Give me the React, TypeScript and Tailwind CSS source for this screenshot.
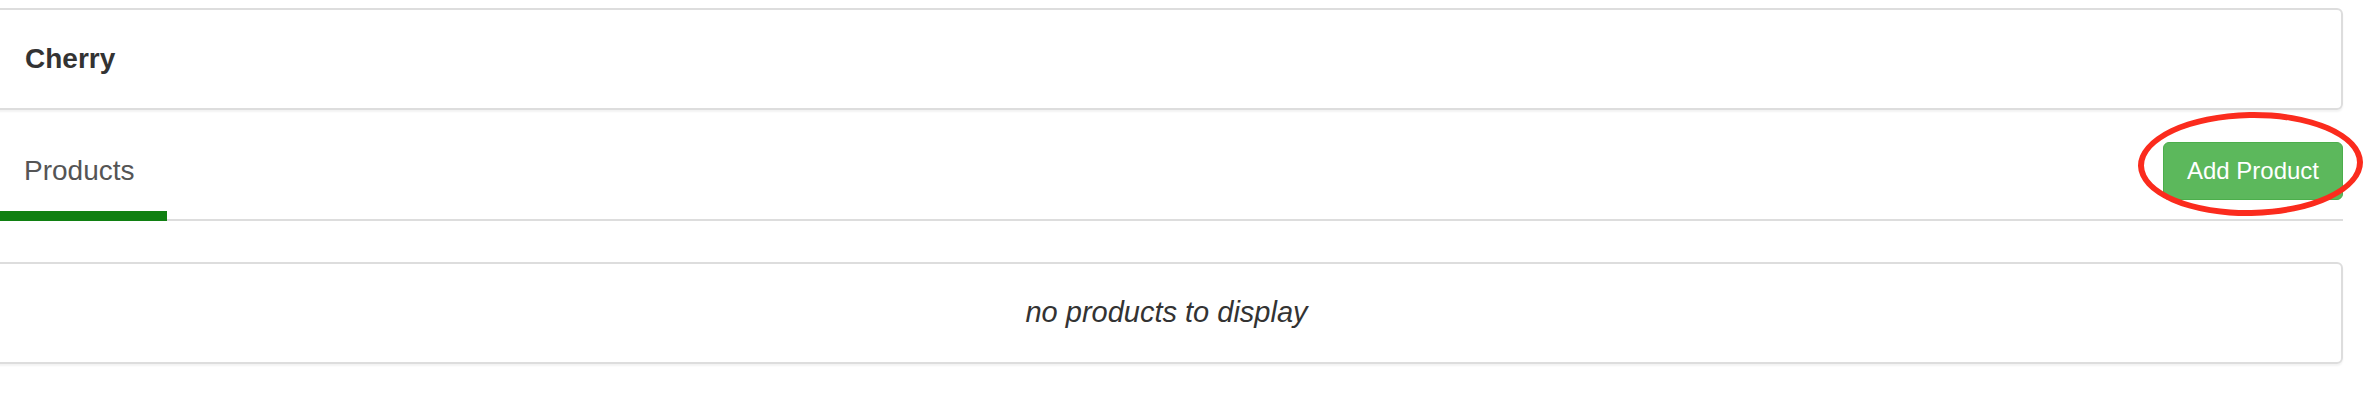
export default function App() {
  return (
    <div className="w-full h-[409px] overflow-hidden bg-white font-['Liberation_Sans',Arial,sans-serif]">
      <div className="-ml-[10px] mr-[20px] pt-[8px]">
        {/* Heading panel */}
        <div className="h-[102px] flex items-center pl-[33px] border-2 border-[#dddddd] rounded-[6px] shadow-[0_2px_2px_rgba(0,0,0,0.05)]">
          <h3 className="text-[28px] font-bold text-[#333333] leading-none">Cherry</h3>
        </div>

        {/* Tabs */}
        <div className="flex items-start justify-between border-b-2 border-[#dddddd]">
          <div className="w-[177px] pl-[34px] pt-[45px] pb-[24px] leading-[32px] text-[28px] text-[#555555] border-b-[10px] border-[#108012] -mb-[2px]">
            Products
          </div>
          <div className="relative mt-[32px]">
            <button className="w-[180px] h-[58px] rounded-[6px] bg-[#5cb85c] border border-[#4cae4c] text-white text-[24px] leading-none">
              Add Product
            </button>
            <div className="absolute -left-[25px] -top-[30px] w-[225px] h-[104px] rounded-[50%] border-[6px] border-[#fb2b1d] pointer-events-none -rotate-1" />
          </div>
        </div>

        {/* Products list */}
        <div className="mt-[41px] h-[102px] flex items-center justify-center border-2 border-[#dddddd] rounded-[6px] shadow-[0_2px_2px_rgba(0,0,0,0.05)]">
          <em className="text-[29px] text-[#333333]">no products to display</em>
        </div>
      </div>
    </div>
  )
}
